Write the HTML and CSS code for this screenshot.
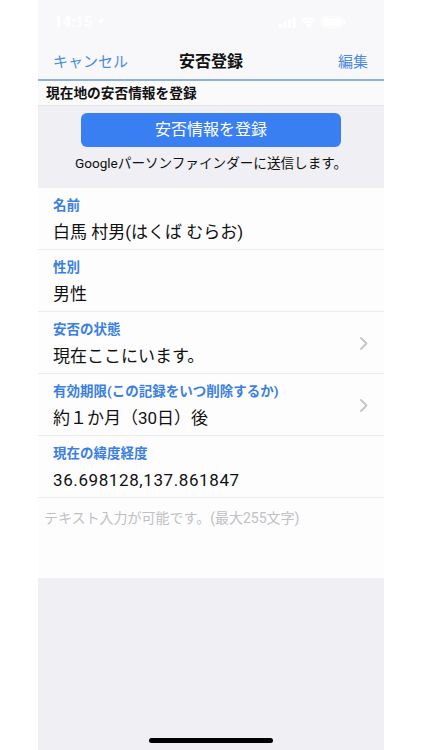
FILE: index.html
```html
<!DOCTYPE html>
<html lang="ja">
<head>
<meta charset="utf-8">
<link rel="stylesheet" href="styles.css">
</head>
<body>
<div class="phone">
  <div class="status">
    <span class="time">14:15 <svg class="loc" width="8" height="8" viewBox="0 0 8 8"><path d="M7.5 0.5 L0.5 3.5 L4 4 L4.5 7.5 Z" fill="#fff"/></svg></span>
    <span class="icons">
      <svg width="17" height="11" viewBox="0 0 17 11"><rect x="0" y="7" width="3" height="4" rx="1" fill="#fff"/><rect x="4.5" y="5" width="3" height="6" rx="1" fill="#fff"/><rect x="9" y="2.5" width="3" height="8.5" rx="1" fill="#fff"/><rect x="13.5" y="0" width="3" height="11" rx="1" fill="#fff"/></svg>
      <svg width="15" height="11" viewBox="0 0 15 11"><path d="M7.5 11 L5 8 A3.5 3.5 0 0 1 10 8 Z M2.8 5.6 A6.5 6.5 0 0 1 12.2 5.6 L11 7 A5 5 0 0 0 4 7 Z M0.5 3.2 A10 10 0 0 1 14.5 3.2 L13.3 4.6 A8.3 8.3 0 0 0 1.7 4.6 Z" fill="#fff"/></svg>
      <svg width="25" height="12" viewBox="0 0 25 12"><rect x="0.5" y="0.5" width="21" height="11" rx="3" fill="none" stroke="#fff"/><rect x="2" y="2" width="18" height="8" rx="1.5" fill="#fff"/><rect x="22.5" y="4" width="1.5" height="4" rx="0.7" fill="#fff"/></svg>
    </span>
  </div>
  <div class="nav">
    <span class="nav-link">キャンセル</span>
    <span class="nav-title">安否登録</span>
    <span class="nav-link">編集</span>
  </div>
  <div class="section-head">現在地の安否情報を登録</div>
  <div class="register">
    <div class="btn">安否情報を登録</div>
    <div class="note">Googleパーソンファインダーに送信します。</div>
  </div>
  <div class="list">
    <div class="row">
      <div class="texts">
        <div class="label">名前</div>
        <div class="value">白馬 村男(はくば むらお)</div>
      </div>
    </div>
    <div class="row">
      <div class="texts">
        <div class="label">性別</div>
        <div class="value">男性</div>
      </div>
    </div>
    <div class="row">
      <div class="texts">
        <div class="label">安否の状態</div>
        <div class="value">現在ここにいます。</div>
      </div>
      <svg class="chev" width="8" height="13" viewBox="0 0 8 13"><path d="M1 1 L6.5 6.5 L1 12" fill="none" stroke="#c4c4c8" stroke-width="1.8" stroke-linecap="round" stroke-linejoin="round"/></svg>
    </div>
    <div class="row">
      <div class="texts">
        <div class="label">有効期限(この記録をいつ削除するか)</div>
        <div class="value">約１か月（30日）後</div>
      </div>
      <svg class="chev" width="8" height="13" viewBox="0 0 8 13"><path d="M1 1 L6.5 6.5 L1 12" fill="none" stroke="#c4c4c8" stroke-width="1.8" stroke-linecap="round" stroke-linejoin="round"/></svg>
    </div>
    <div class="row">
      <div class="texts">
        <div class="label">現在の緯度経度</div>
        <div class="value num">36.698128,137.861847</div>
      </div>
    </div>
    <div class="memo">テキスト入力が可能です。(最大255文字)</div>
  </div>
  <div class="bottom">
    <div class="home"></div>
  </div>
</div>
</body>
</html>
```

FILE: styles.css
```css
* { box-sizing: border-box; }
html, body {
  margin: 0;
  padding: 0;
  background: #ffffff;
}
body {
  font-family: Roboto, "Noto Sans CJK JP", "Noto Sans", sans-serif;
  color: #111;
}
.phone {
  width: 346px;
  height: 750px;
  margin: 0 auto;
  display: flex;
  flex-direction: column;
  background: #efeff4;
}
.status {
  height: 44px;
  background: #f8f8fa;
  display: flex;
  justify-content: space-between;
  align-items: center;
  padding: 0 38px 0 16px;
}
.time {
  color: #fff;
  font-size: 15px;
  font-weight: 600;
  display: flex;
  align-items: center;
  gap: 4px;
}
.icons {
  display: flex;
  align-items: center;
  gap: 5px;
}
.nav {
  height: 37px;
  background: #f8f8fa;
  display: flex;
  justify-content: space-between;
  align-items: center;
  padding: 0 16px 0 15px;
  border-bottom: 2px solid #8eb1dc;
  position: relative;
}
.nav-link {
  color: #4a8be4;
  font-size: 15px;
  line-height: 20px;
}
.nav-title {
  position: absolute;
  left: 0;
  right: 0;
  text-align: center;
  font-size: 16px;
  font-weight: 700;
  line-height: 20px;
  pointer-events: none;
}
.section-head {
  height: 25px;
  background: #fafafa;
  font-size: 13.7px;
  font-weight: 700;
  line-height: 25px;
  padding-left: 8px;
  border-bottom: 1px solid #e6e6e8;
}
.register {
  height: 82px;
  background: #efeff4;
  display: flex;
  flex-direction: column;
  align-items: center;
  padding-top: 7px;
}
.btn {
  width: 260px;
  height: 34px;
  background: #3a7ff1;
  border-radius: 6px;
  color: #fff;
  font-size: 16px;
  line-height: 34px;
  text-align: center;
}
.note {
  margin-top: 6px;
  font-size: 13.6px;
  line-height: 20px;
  color: #111;
}
.list {
  background: #fdfdfd;
}
.row {
  height: 62px;
  display: flex;
  align-items: center;
  justify-content: space-between;
  padding: 0 16px 0 15px;
  border-bottom: 1px solid #ececee;
}
.texts {
  display: flex;
  flex-direction: column;
  gap: 7px;
  padding-top: 1px;
}
.label {
  color: #3b80e0;
  font-size: 13.5px;
  font-weight: 700;
  line-height: 18px;
}
.value {
  font-size: 17px;
  line-height: 22px;
  color: #111;
}
.num {
  letter-spacing: 0.6px;
}
.chev {
  margin-top: 2px;
}
.memo {
  height: 80px;
  padding: 11px 0 0 6px;
  color: #c0c0c4;
  font-size: 14px;
  line-height: 18px;
}
.bottom {
  flex: 1;
  background: #efeff4;
  display: flex;
  align-items: flex-end;
  justify-content: center;
  padding-bottom: 7px;
}
.home {
  width: 124px;
  height: 5px;
  border-radius: 3px;
  background: #000;
}
```
